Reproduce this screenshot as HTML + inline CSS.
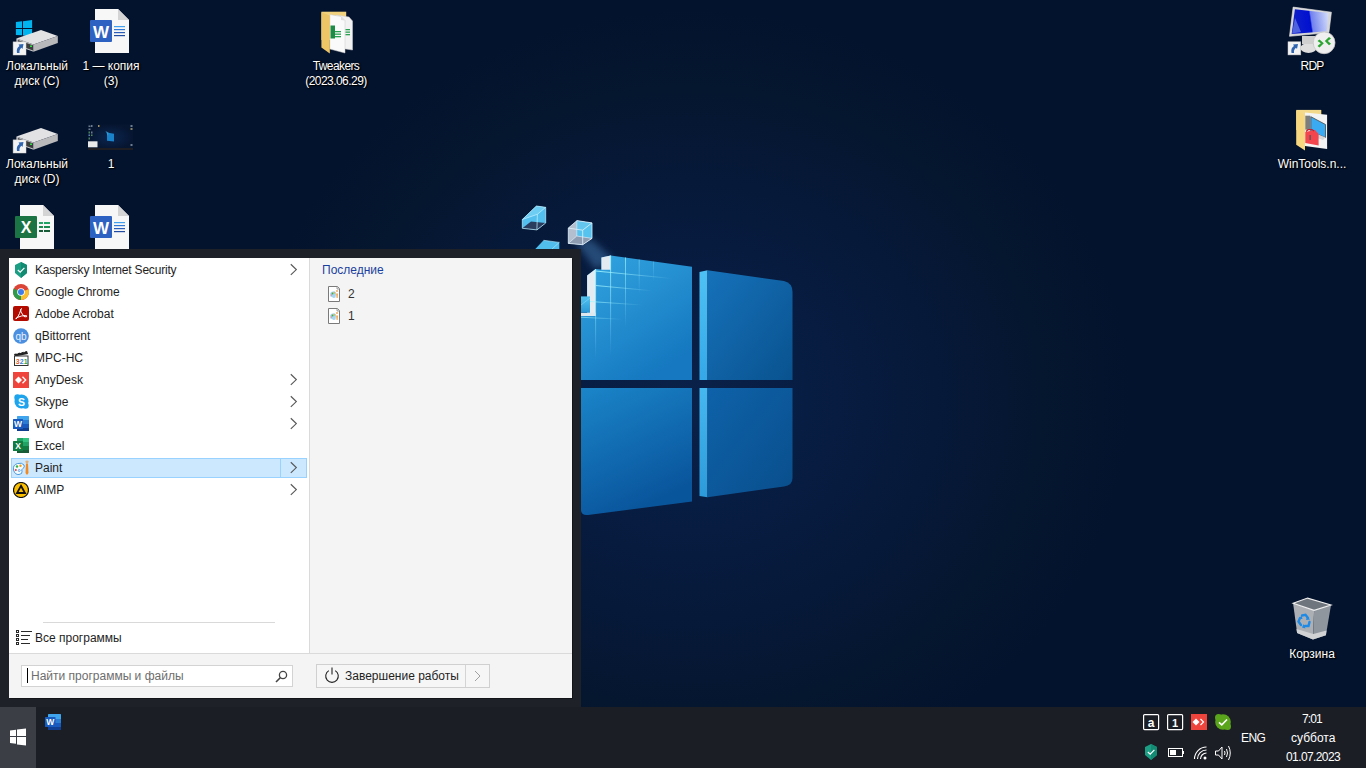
<!DOCTYPE html>
<html><head><meta charset="utf-8">
<style>
*{margin:0;padding:0;box-sizing:border-box}
html,body{width:1366px;height:768px;overflow:hidden;background:#04132d}
body{position:relative;font-family:"Liberation Sans",sans-serif;font-size:12px}
.a{position:absolute}
.t{position:absolute;white-space:nowrap;line-height:15px}
#bg{left:0;top:0;width:1366px;height:768px;
 background:radial-gradient(ellipse 440px 390px at 690px 400px,#0a2149 0%,#071b3f 40%,#05162f 80%,#04132d 100%)}
.lbl{color:#fff;text-shadow:0 0 2px #000,1px 1px 1px #000;text-align:center}
.m{color:#1e1e1e}
.tr{color:#fff}
</style></head><body>
<div id="bg" class="a"></div>

<!-- Big windows logo + cubes -->
<svg class="a" style="left:500px;top:190px" width="320" height="340" viewBox="500 190 320 340">
 <defs>
  <linearGradient id="gl" x1="0" y1="0" x2="0.6" y2="1">
   <stop offset="0" stop-color="#33a5e1"/><stop offset="1" stop-color="#1578c0"/>
  </linearGradient>
  <linearGradient id="gr" x1="0" y1="0" x2="1" y2="1">
   <stop offset="0" stop-color="#1672ba"/><stop offset="1" stop-color="#09528f"/>
  </linearGradient>
  <linearGradient id="gbl" x1="0" y1="0" x2="0.5" y2="1">
   <stop offset="0" stop-color="#1c88cc"/><stop offset="1" stop-color="#09559c"/>
  </linearGradient>
  <linearGradient id="gbr" x1="0" y1="0" x2="1" y2="1">
   <stop offset="0" stop-color="#0e62a9"/><stop offset="1" stop-color="#094e8c"/>
  </linearGradient>
  <linearGradient id="sidet" x1="0" y1="0" x2="0" y2="1"><stop offset="0" stop-color="#4fc2f4"/><stop offset="1" stop-color="#34a8e8"/></linearGradient>
  <linearGradient id="sideb" x1="0" y1="0" x2="0" y2="1"><stop offset="0" stop-color="#46b8f0"/><stop offset="1" stop-color="#2c9ad9"/></linearGradient>
  <radialGradient id="beam" cx="0.5" cy="0.5" r="0.5">
   <stop offset="0" stop-color="#6fb6e6" stop-opacity="0.55"/><stop offset="1" stop-color="#3a7ab8" stop-opacity="0"/>
  </radialGradient>
 </defs>
 <filter id="blr" x="-50%" y="-50%" width="200%" height="200%"><feGaussianBlur stdDeviation="3.5"/></filter>
 <path d="M576 243 L591 239 L612 258 L596 270 Z" fill="#4f8cc6" opacity="0.42" filter="url(#blr)"/>
 <!-- top-left pane -->
 <linearGradient id="fadeh" x1="0" y1="0" x2="1" y2="0"><stop offset="0" stop-color="#a0f4ff" stop-opacity="0.9"/><stop offset="1" stop-color="#a0f4ff" stop-opacity="0"/></linearGradient>
 <linearGradient id="fadev" x1="0" y1="0" x2="0" y2="1"><stop offset="0" stop-color="#a0f4ff" stop-opacity="0.9"/><stop offset="1" stop-color="#a0f4ff" stop-opacity="0"/></linearGradient>
 <path d="M581 380 L581 315.3 L587.1 315.3 L587.1 275.6 L595.6 269.1 L601.4 269.5 L601.4 257.4 L610.6 255.4 L692 266.7 L692 380 Z" fill="url(#gl)"/>
 <path d="M587.1 275.6 L595.6 269.1 L595.6 316 L587.1 316 Z" fill="#e4ebf1"/>
 <path d="M601.4 257.4 L610.6 255.4 L610.6 269.7 L601.4 269.7 Z" fill="#e4ebf1"/>
 <rect x="581" y="312.7" width="14.6" height="3.3" fill="#dfe8ef"/>
 <linearGradient id="cubeg" x1="0" y1="0" x2="0" y2="1"><stop offset="0" stop-color="#52c2f0"/><stop offset="1" stop-color="#2b98d6"/></linearGradient>
 <rect x="580.9" y="296.4" width="9.1" height="16.3" fill="url(#cubeg)"/>
 <path d="M581 305 L590 298" stroke="#9fe6ff" stroke-width="0.6" opacity="0.7"/>
 <rect x="595.1" y="269" width="1" height="90" fill="url(#fadev)"/>
 <rect x="610.1" y="255.5" width="1" height="100" fill="url(#fadev)"/>
 <rect x="625" y="257.5" width="1" height="70" fill="url(#fadev)" opacity="0.8"/>
 <rect x="638.7" y="259.5" width="1" height="35" fill="url(#fadev)" opacity="0.45"/>
 <rect x="653" y="261.5" width="1" height="20" fill="url(#fadev)" opacity="0.3"/>
 <path d="M595.6 270.5 L672 278 L672 279 L595.6 271.5 Z" fill="url(#fadeh)"/>
 <path d="M595.6 285 L652 290.3 L652 291.3 L595.6 286 Z" fill="url(#fadeh)" opacity="0.9"/>
 <path d="M590 301 L642 304.5 L642 305.5 L590 302 Z" fill="url(#fadeh)" opacity="0.8"/>
 <path d="M581 316.8 L622 318.8 L622 319.8 L581 317.8 Z" fill="url(#fadeh)" opacity="0.7"/>
 <!-- top-right pane -->
 <path d="M699.5 272 L707.5 270.2 L707.5 380 L699.5 380 Z" fill="url(#sidet)"/>
 <path d="M707.5 270.2 L784 281 Q792.5 283 792.5 292 L792.5 380 L707.5 380 Z" fill="url(#gr)"/>
 <!-- bottom-left pane -->
 <path d="M560 388 L692 388 L692 501.5 L588 515 Q581 515.5 581 510 L560 515 Z" fill="url(#gbl)"/>
 <!-- bottom-right pane -->
 <path d="M699.5 388 L707.5 388 L707.5 497.3 L699.5 496 Z" fill="url(#sideb)"/>
 <path d="M707.5 388 L792.5 388 L792.5 478 Q792.5 485.5 784 486.5 L707.5 497.3 Z" fill="url(#gbr)"/>
 <!-- cubes -->
 <path d="M522.3 219.5 L536.4 206 L545.7 207.3 L545.7 223 L536.9 229.9 L522.3 228.3 Z" fill="#52bfee"/>
 <path d="M522.3 228.3 L531 221.5 L545.7 223 L536.9 229.9 Z" fill="#2b3d5e"/>
 <path d="M522.3 219.5 L536.4 206 L545.7 207.3 L537.4 214.3 Z" fill="#6dcdf3"/>
 <g stroke="#c6f0ff" stroke-width="0.7" fill="none">
  <path d="M522.3 219.5 L536.4 206 L545.7 207.3 L545.7 223 L536.9 229.9 L522.3 228.3 Z"/>
  <path d="M522.3 219.5 L537.4 214.3 L545.7 207.3 M537.4 214.3 L536.9 229.9"/>
 </g>
 <path d="M568.3 228.1 L577 220.6 L592 222.9 L592 238.4 L582.7 244.7 L568.3 243.4 Z" fill="#b3bfcf"/>
 <path d="M576.8 220.8 L592 222.9 L592 238.4 L576.8 236 Z" fill="#56c2ee"/>
 <path d="M576.8 220.8 L592 222.9 L582.7 230.2 L576.8 229 Z" fill="#62c6ef"/>
 <path d="M568.3 243.4 L576.8 236 L592 238.4 L582.7 244.7 Z" fill="#8e9cb2"/>
 <g stroke="#e2f4ff" stroke-width="0.8" fill="none">
  <path d="M568.3 228.1 L577 220.6 L592 222.9 L592 238.4 L582.7 244.7 L568.3 243.4 Z"/>
  <path d="M568.3 228.1 L582.7 230.2 L592 222.9 M582.7 230.2 L582.7 244.7"/>
  <path d="M576.8 220.8 L576.8 236 L568.3 243.4 M576.8 236 L592 238.4" opacity="0.75"/>
 </g>
 <path d="M535.3 249 L543.6 240.3 L559.3 242.4 L559.3 249 Z" fill="#50bdec"/>
 <path d="M543.6 240.3 L559.3 242.4 L552 249" stroke="#b8ecff" stroke-width="0.6" fill="none"/>
</svg>

<!-- ===== Desktop icons ===== -->
<!-- C drive -->
<svg class="a" style="left:10px;top:15px" width="30" height="30" viewBox="10 15 30 30">
 <path d="M15.9 22 L22 21.3 L22 28 L15.9 28 Z M23 21.2 L32.1 19.9 L32.1 28 L23 28 Z M15.9 29 L22 29 L22 35.3 L15.9 34.9 Z M23 29 L32.1 29 L32.1 36.8 L23 35.6 Z" fill="#00b4f0"/>
</svg>
<svg class="a" style="left:10px;top:15px" width="52" height="42" viewBox="10 15 52 42">
 <g transform="translate(0,0)">
 <path d="M16.4 38.5 L41 30 L57.8 36 L33.5 44.5 Z" fill="#e2e2e4"/>
 <path d="M33.5 44.5 L57.8 36 L57.8 43 L33.5 51.7 Z" fill="#b9b9bb"/>
 <path d="M16.4 38.5 L33.5 44.5 L33.5 51.7 L16.4 45.5 Z" fill="#c9c9cb"/>
 <path d="M17.8 40 L33 45.3 L33 50.6 L17.8 45 Z" fill="#3c3c3e"/>
 <rect x="30" y="45.5" width="2" height="1.5" fill="#30e040"/>
 <rect x="13.1" y="41.9" width="12.9" height="13.1" fill="#f3f3f3" stroke="#d0d0d0" stroke-width="0.5"/>
 <path d="M17 53 Q16 48 19.5 46 L18.5 44.5 L23.5 44 L22.5 49 L21.5 47.8 Q19 49.5 19.5 53 Z" fill="#2f64b0"/>
 </g>
</svg>
<div class="t lbl" style="left:0;top:59px;width:74px">Локальный<br>диск (C)</div>

<!-- Word doc 1 — копия (3) -->
<svg class="a" style="left:90px;top:9px" width="40" height="44" viewBox="0 0 40 44">
 <path d="M5 0 L28 0 L39 11 L39 44 L5 44 Z" fill="#f7f7f7"/>
 <path d="M28 0 L39 11 L28 11 Z" fill="#d4d4d4"/>
 <rect x="0" y="11" width="22" height="22" rx="1" fill="#2d62c2"/>
 <text x="11" y="28.5" style="font-family:'Liberation Sans'" font-weight="bold" font-size="17" fill="#fff" text-anchor="middle">W</text>
 <rect x="24" y="17" width="11" height="1.2" fill="#41a0f0"/><rect x="24" y="20" width="11" height="1.2" fill="#2d78d8"/>
 <rect x="24" y="23" width="11" height="1.2" fill="#2a5dbb"/><rect x="24" y="26" width="11" height="1.2" fill="#204ba3"/>
</svg>
<div class="t lbl" style="left:74px;top:59px;width:74px">1 — копия<br>(3)</div>

<!-- Tweakers folder -->
<svg class="a" style="left:318px;top:9px" width="38" height="48" viewBox="318 9 38 48">
 <path d="M321.4 11.7 L346.2 11.7 L346.2 40 L321.4 40 Z" fill="#f3d27e"/>
 <path d="M336 15 L349 17 L352.5 21 L352.5 50 L339 48 Z" fill="#f2f2f2" stroke="#cfcfcf" stroke-width="0.5"/>
 <path d="M329.8 14.5 L341 16.5 L345 20.5 L345 53 L329.8 49 Z" fill="#fafafa" stroke="#c8c8c8" stroke-width="0.5"/>
 <path d="M341 16.5 L345 20.5 L341 20 Z" fill="#ddd"/>
 <rect x="330.5" y="25.5" width="4.5" height="13" fill="#1d8a45"/>
 <rect x="335" y="31" width="6" height="1.3" fill="#2aa152"/><rect x="335" y="33.5" width="6" height="1.3" fill="#2aa152"/><rect x="335" y="36" width="6" height="1.3" fill="#2aa152"/>
 <rect x="345.5" y="29" width="4.5" height="1.3" fill="#2aa152"/><rect x="345.5" y="31.5" width="4.5" height="1.3" fill="#2aa152"/><rect x="345.5" y="34" width="4.5" height="1.3" fill="#2aa152"/>
 <path d="M321.4 12.3 L329.8 15.5 L329.8 53.4 L321.4 47.5 Z" fill="#eec566"/>
</svg>
<div class="t lbl" style="left:299px;top:59px;width:74px"><span style="letter-spacing:-0.6px">Tweakers</span><br><span style="letter-spacing:-0.55px">(2023.06.29)</span></div>

<!-- D drive -->
<svg class="a" style="left:10px;top:113px" width="52" height="42" viewBox="10 15 52 42">
 <g transform="translate(0,0)">
 <path d="M16.4 38.5 L41 30 L57.8 36 L33.5 44.5 Z" fill="#e2e2e4"/>
 <path d="M33.5 44.5 L57.8 36 L57.8 43 L33.5 51.7 Z" fill="#b9b9bb"/>
 <path d="M16.4 38.5 L33.5 44.5 L33.5 51.7 L16.4 45.5 Z" fill="#c9c9cb"/>
 <path d="M17.8 40 L33 45.3 L33 50.6 L17.8 45 Z" fill="#3c3c3e"/>
 <rect x="30" y="45.5" width="2" height="1.5" fill="#30e040"/>
 <rect x="13.1" y="41.9" width="12.9" height="13.1" fill="#f3f3f3" stroke="#d0d0d0" stroke-width="0.5"/>
 <path d="M17 53 Q16 48 19.5 46 L18.5 44.5 L23.5 44 L22.5 49 L21.5 47.8 Q19 49.5 19.5 53 Z" fill="#2f64b0"/>
 </g>
</svg>
<div class="t lbl" style="left:0;top:157px;width:74px">Локальный<br>диск (D)</div>

<!-- screenshot 1 -->
<svg class="a" style="left:88px;top:124px" width="46" height="27" viewBox="88 124 46 27">
 <defs><radialGradient id="thg" cx="0.5" cy="0.5" r="0.5"><stop offset="0" stop-color="#0b2650"/><stop offset="1" stop-color="#061530"/></radialGradient></defs>
 <rect x="88" y="124.5" width="45" height="25.5" fill="url(#thg)"/>
 <rect x="88" y="148" width="45" height="2" fill="#1e1e22"/>
 <rect x="88" y="141.3" width="9.5" height="6" fill="#e9e9e9"/>
 <path d="M107 132.5 L114 133.8 L114 141.5 L107 140.8 Z" fill="#1a82c8"/>
 <path d="M105.5 131 L108.5 132.5 L108 136 Z" fill="#3aa6e0" opacity="0.7"/>
 <g fill="#8896a8" opacity="0.8">
  <rect x="88.5" y="125.5" width="2" height="1.5"/><rect x="91" y="125" width="1.5" height="2"/><rect x="98" y="125" width="1.5" height="2" fill="#c8b070"/>
  <rect x="88.5" y="128.5" width="2" height="1.5"/>
  <rect x="88.5" y="131.5" width="1.5" height="2" fill="#5a9a6a"/><rect x="91" y="131.5" width="1.5" height="2"/>
  <rect x="88.5" y="134.5" width="1.5" height="1.5" fill="#7aa0e0"/><rect x="91" y="134.5" width="1.5" height="1.5" fill="#6aaa5a"/>
  <rect x="88.5" y="137.5" width="1.5" height="2" fill="#5a9a6a"/>
  <rect x="130.5" y="125" width="2" height="2"/><rect x="130.5" y="128" width="2" height="2" fill="#a89a70"/><rect x="130.5" y="144" width="2" height="2"/>
 </g>
</svg>
<div class="t lbl" style="left:74px;top:157px;width:74px">1</div>

<!-- row3 excel -->
<svg class="a" style="left:15px;top:205px" width="40" height="44" viewBox="0 0 40 44">
 <path d="M5 0 L28 0 L39 11 L39 44 L5 44 Z" fill="#f7f7f7"/>
 <path d="M28 0 L39 11 L28 11 Z" fill="#d4d4d4"/>
 <rect x="0" y="11" width="22" height="22" rx="1" fill="#1b7443"/>
 <text x="11" y="28" style="font-family:'Liberation Sans'" font-weight="bold" font-size="16" fill="#fff" text-anchor="middle">X</text>
 <rect x="24" y="17" width="4" height="2" fill="#21a366"/><rect x="29" y="17" width="6" height="2" fill="#21a366"/>
 <rect x="24" y="21" width="4" height="2" fill="#1a8a50"/><rect x="29" y="21" width="6" height="2" fill="#1a8a50"/>
 <rect x="24" y="25" width="4" height="2" fill="#185c37"/><rect x="29" y="25" width="6" height="2" fill="#185c37"/>
</svg>
<!-- row3 word -->
<svg class="a" style="left:90px;top:205px" width="40" height="44" viewBox="0 0 40 44">
 <path d="M5 0 L28 0 L39 11 L39 44 L5 44 Z" fill="#f7f7f7"/>
 <path d="M28 0 L39 11 L28 11 Z" fill="#d4d4d4"/>
 <rect x="0" y="11" width="22" height="22" rx="1" fill="#2d62c2"/>
 <text x="11" y="28.5" style="font-family:'Liberation Sans'" font-weight="bold" font-size="17" fill="#fff" text-anchor="middle">W</text>
 <rect x="24" y="17" width="11" height="1.2" fill="#41a0f0"/><rect x="24" y="20" width="11" height="1.2" fill="#2d78d8"/>
 <rect x="24" y="23" width="11" height="1.2" fill="#2a5dbb"/><rect x="24" y="26" width="11" height="1.2" fill="#204ba3"/>
</svg>

<!-- RDP -->
<svg class="a" style="left:1284px;top:2px" width="56" height="56" viewBox="1284 2 56 56">
 <defs><linearGradient id="rdps" x1="0" y1="0.1" x2="1" y2="0">
  <stop offset="0" stop-color="#1020c8"/><stop offset="0.46" stop-color="#0010d0"/><stop offset="0.5" stop-color="#7080ee"/><stop offset="1" stop-color="#d8e2fb"/></linearGradient></defs>
 <ellipse cx="1308.5" cy="48" rx="8" ry="5" fill="#dedede"/>
 <rect x="1302" y="36" width="13" height="8" fill="#cfcfcf"/>
 <path d="M1293.1 7.1 L1331.4 12.2 L1328.9 32.6 L1289.5 36.3 Z" fill="#d6d6d6" stroke="#eee" stroke-width="0.6"/>
 <path d="M1294.9 9.3 L1328.5 12.9 L1326.7 31.2 L1291.7 34.1 Z" fill="url(#rdps)"/>
 <path d="M1295 18 L1301 32 L1292 33.5 Z" fill="#6c80e8" opacity="0.7"/>
 <circle cx="1324.1" cy="42.8" r="10.9" fill="#efefef" stroke="#c4c4c4" stroke-width="0.8"/>
 <path d="M1317.5 41 L1319.5 39.5 L1323.8 43.3 L1319.5 47.5 L1317.5 46 L1320.8 43.3 Z M1331 38.5 L1329 37 L1324.8 41 L1329 45.3 L1331 43.8 L1327.8 41 Z" fill="#2aa52f"/>
 <rect x="1288" y="41.8" width="12.8" height="13.1" fill="#f3f3f3" stroke="#d0d0d0" stroke-width="0.5"/>
 <path d="M1291.5 53 Q1290.5 48 1294 46 L1293 44.5 L1298 44 L1297 49 L1296 47.8 Q1293.5 49.5 1294 53 Z" fill="#2f64b0"/>
</svg>
<div class="t lbl" style="left:1274px;top:59px;width:76px;letter-spacing:-0.8px">RDP</div>

<!-- WinTools -->
<svg class="a" style="left:1292px;top:106px" width="40" height="48" viewBox="1292 106 40 48">
 <path d="M1296.2 109.9 L1321.3 109.9 L1321.3 130 L1296.2 130 Z" fill="#f5d98a"/>
 <path d="M1305 112.5 L1327.1 114.8 L1327.1 149 L1305 146 Z" fill="#f4f4f4"/>
 <rect x="1305.3" y="115.7" width="4.9" height="14" fill="#7d7d7d"/>
 <path d="M1310.8 116.7 L1325.5 124.5 L1325.5 137.6 L1310.8 131.7 Z" fill="#3aabf2" stroke="#444" stroke-width="0.8"/>
 <path d="M1311 131.5 L1325.5 137.5 L1323 140 L1314 137 Z" fill="#d8d8d8"/>
 <path d="M1305.3 132 L1315 130 L1318.6 134 L1318.6 145.4 L1305.3 143 Z" fill="#f2454d"/>
 <path d="M1306 131.5 L1308 129.7 L1312 129.5 L1314 131" stroke="#c02030" stroke-width="1.2" fill="none"/>
 <rect x="1309.5" y="135" width="1.3" height="5" fill="#555"/>
 <path d="M1296.2 110.5 L1305 115.5 L1305 150.6 L1296.2 144.7 Z" fill="#f7d77f"/>
</svg>
<div class="t lbl" style="left:1274px;top:157px;width:76px">WinTools.n...</div>

<!-- Recycle bin -->
<svg class="a" style="left:1288px;top:592px" width="48" height="52" viewBox="1288 592 48 52">
 <path d="M1293.1 603.2 L1314.1 610.3 L1313 639.4 L1297.1 633 Z" fill="#acb0b5"/>
 <path d="M1314.1 610.3 L1331 604.9 L1325.9 635.3 L1313 639.4 Z" fill="#90969d"/>
 <path d="M1293.1 603.2 L1307.6 598.1 L1331 604.9 L1314.1 610.3 Z" fill="#6f757c"/>
 <path d="M1293.1 603.2 L1307.6 598.1 L1331 604.9 L1314.1 610.3 Z" fill="none" stroke="#f0f0f0" stroke-width="1.1"/>
 <path d="M1296.5 629 L1313.3 634 L1326.5 630.5 L1325.9 635.3 L1313 639.4 L1297.1 633 Z" fill="#d0d2d4"/>
 <g fill="none" stroke="#1e8ae6" stroke-width="2.4" stroke-linecap="round">
  <path d="M1302 615.5 L1305.5 614.8 L1308 618"/>
  <path d="M1309.5 622 L1308.5 626 L1305 626"/>
  <path d="M1301 625 L1298.5 621.5 L1300 618"/>
 </g>
 <path d="M1307 616.5 L1310 619.5 L1306 620 Z M1303.5 624 L1305.5 628.5 L1302 627.5 Z M1299 619 L1301.5 615.5 L1302.5 619 Z" fill="#1e8ae6"/>
</svg>
<div class="t lbl" style="left:1274px;top:647px;width:76px">Корзина</div>

<!-- ===== Start menu ===== -->
<div class="a" style="left:0;top:249px;width:581px;height:458px;background:#1e2128"></div>
<div class="a" style="left:9px;top:258px;width:563px;height:440px;background:#fff;box-shadow:1px 1px 0 #121418"></div>
<!-- right panel -->
<div class="a" style="left:309px;top:258px;width:263px;height:395px;background:#f4f4f4;border-left:1px solid #dadada"></div>
<!-- bottom band -->
<div class="a" style="left:9px;top:653px;width:563px;height:45px;background:#f4f4f4;border-top:1px solid #dadada"></div>

<!-- highlight -->
<div class="a" style="left:11px;top:458px;width:296px;height:20px;background:#cce8ff;border:1px solid #99d1ff"></div>
<div class="a" style="left:280px;top:459px;width:1px;height:18px;background:#99d1ff"></div>

<!-- menu texts -->
<div class="t m" style="left:35px;top:263px;letter-spacing:-0.2px">Kaspersky Internet Security</div>
<div class="t m" style="left:35px;top:285px">Google Chrome</div>
<div class="t m" style="left:35px;top:307px">Adobe Acrobat</div>
<div class="t m" style="left:35px;top:329px">qBittorrent</div>
<div class="t m" style="left:35px;top:351px">MPC-HC</div>
<div class="t m" style="left:35px;top:373px">AnyDesk</div>
<div class="t m" style="left:35px;top:395px">Skype</div>
<div class="t m" style="left:35px;top:417px">Word</div>
<div class="t m" style="left:35px;top:439px">Excel</div>
<div class="t m" style="left:35px;top:461px">Paint</div>
<div class="t m" style="left:35px;top:483px">AIMP</div>

<!-- chevrons -->
<svg class="a" style="left:285px;top:258px" width="20" height="250" viewBox="285 258 20 250">
 <g stroke="#5a5a5a" stroke-width="1.2" fill="none">
  <path d="M290.8 264.3 L296.3 269.6 L290.8 274.9"/>
  <path d="M290.8 374.3 L296.3 379.6 L290.8 384.9"/>
  <path d="M290.8 396.3 L296.3 401.6 L290.8 406.9"/>
  <path d="M290.8 418.3 L296.3 423.6 L290.8 428.9"/>
  <path d="M290.8 462.3 L296.3 467.6 L290.8 472.9"/>
  <path d="M290.8 484.3 L296.3 489.6 L290.8 494.9"/>
 </g>
</svg>

<!-- menu icons -->
<!-- kaspersky -->
<svg class="a" style="left:13px;top:262px" width="16" height="16" viewBox="0 0 16 16">
 <path d="M8 0 L14 3 L14 11 L8 16 L2 11 L2 3 Z" fill="#1b9e84"/>
 <path d="M8 0 L14 3 L14 11 L8 16 Z" fill="#138a72"/>
 <path d="M4.8 8 L7.2 10.2 L11.4 5.8" stroke="#fff" stroke-width="1.2" fill="none"/>
</svg>
<!-- chrome -->
<svg class="a" style="left:13px;top:284px" width="16" height="16" viewBox="0 0 16 16">
 <circle cx="8" cy="8" r="8" fill="#db4437"/>
 <path d="M8 8 L15.5 5.3 A8 8 0 0 1 8 16 Z" fill="#fbc02d"/>
 <path d="M8 8 L8 16 A8 8 0 0 1 0.8 4.6 Z" fill="#2e9b4a"/>
 <circle cx="8" cy="8" r="3.8" fill="#fff"/><circle cx="8" cy="8" r="3" fill="#3f7ee8"/>
</svg>
<!-- acrobat -->
<svg class="a" style="left:13px;top:306px" width="16" height="16" viewBox="0 0 16 16">
 <rect x="0" y="0" width="16" height="15" rx="2" fill="#b30b00"/>
 <path d="M8.5 2.5 Q7 2.5 8 6 L11 10.5 Q14 11.5 14 10 Q13 9 8.5 10 L4 11.5 Q2 13 3 13 Q4 13 6.5 7.5 Q8 3 8.5 2.5Z" stroke="#fff" stroke-width="1" fill="none"/>
</svg>
<!-- qbittorrent -->
<svg class="a" style="left:13px;top:328px" width="16" height="16" viewBox="0 0 16 16">
 <circle cx="8" cy="8" r="7.8" fill="#4a8fe0"/>
 <text x="8" y="11.5" style="font-family:'Liberation Sans'" font-size="10" fill="#e8f1ff" text-anchor="middle">qb</text>
</svg>
<!-- mpc-hc -->
<svg class="a" style="left:13px;top:350px" width="16" height="16" viewBox="0 0 16 16">
 <path d="M1 4 L14 1 L15 4 L2 6.5 Z" fill="#222"/>
 <path d="M3.5 3.5 L5 2.8 M7 2.6 L8.5 2.2 M10.5 1.8 L12 1.5" stroke="#fff" stroke-width="0.9"/>
 <rect x="1.5" y="6" width="13.5" height="9.5" fill="#fff" stroke="#333" stroke-width="1"/>
 <text x="2.8" y="14" style="font-family:'Liberation Sans'" font-weight="bold" font-size="7" fill="#e0662a">3</text>
 <text x="6.8" y="14" style="font-family:'Liberation Sans'" font-weight="bold" font-size="7" fill="#3a82d8">2</text>
 <text x="10.8" y="14" style="font-family:'Liberation Sans'" font-weight="bold" font-size="7" fill="#3aa63a">1</text>
</svg>
<!-- anydesk -->
<svg class="a" style="left:13px;top:372px" width="16" height="16" viewBox="0 0 16 16">
 <rect width="16" height="16" fill="#ef443b"/>
 <path d="M5.5 4.5 L9 8 L5.5 11.5 L2 8 Z" fill="#fff"/>
 <path d="M9.5 4.8 L12.7 8 L9.5 11.2" stroke="#fff" stroke-width="1.3" fill="none"/>
</svg>
<!-- skype -->
<svg class="a" style="left:14px;top:394px" width="15" height="15" viewBox="0 0 15 15">
 <circle cx="7.5" cy="7.5" r="7" fill="#1ea4ec"/>
 <circle cx="3.5" cy="3.5" r="3.2" fill="#1ea4ec"/><circle cx="11.5" cy="11.5" r="3.2" fill="#1ea4ec"/>
 <text x="7.5" y="11.5" style="font-family:'Liberation Sans'" font-weight="bold" font-size="10.5" fill="#fff" text-anchor="middle">S</text>
</svg>
<!-- word -->
<svg class="a" style="left:13px;top:416px" width="16" height="16" viewBox="0 0 16 16">
 <rect x="4" y="0" width="12" height="15" rx="0.5" fill="#41a5ee"/>
 <rect x="4" y="4" width="12" height="4" fill="#2b7cd3"/>
 <rect x="4" y="8" width="12" height="4" fill="#185abd"/>
 <rect x="4" y="12" width="12" height="3" fill="#103f91"/>
 <rect x="0" y="3" width="10" height="10" rx="0.5" fill="#185abd"/>
 <text x="5" y="11.3" style="font-family:'Liberation Sans'" font-weight="bold" font-size="8.5" fill="#fff" text-anchor="middle">W</text>
</svg>
<!-- excel -->
<svg class="a" style="left:13px;top:438px" width="16" height="16" viewBox="0 0 16 16">
 <rect x="4" y="0" width="12" height="15" rx="0.5" fill="#21a366"/>
 <rect x="10" y="0" width="6" height="4" fill="#33c481"/>
 <rect x="4" y="8" width="12" height="4" fill="#107c41"/>
 <rect x="4" y="12" width="12" height="3" fill="#185c37"/>
 <rect x="0" y="3" width="10" height="10" rx="0.5" fill="#107c41"/>
 <text x="5" y="11.3" style="font-family:'Liberation Sans'" font-weight="bold" font-size="8.5" fill="#fff" text-anchor="middle">X</text>
</svg>
<!-- paint -->
<svg class="a" style="left:12px;top:460px" width="18" height="16" viewBox="0 0 18 16">
 <path d="M1.5 10 Q0.5 5 5.5 3.5 Q10 2.3 12 5 Q13 7 11 8.5 Q9 9.5 10 11.5 Q10.5 14 7 14.5 Q3 15 1.5 10Z" fill="#f4fbff" stroke="#3a8ed8" stroke-width="0.9"/>
 <circle cx="5" cy="6.5" r="1.2" fill="#35b34a"/><circle cx="8.5" cy="5.8" r="1.2" fill="#f3a21b"/>
 <circle cx="3.8" cy="10" r="1" fill="#e5413b"/><circle cx="7.2" cy="10.5" r="1" fill="none" stroke="#3a8ed8" stroke-width="0.7"/>
 <path d="M14 3.5 L16 3.5 L16.5 13 L15 15 L13.5 13 Z" fill="#f08a24"/>
 <path d="M13.3 1 Q15 0 16.7 1 L16 3.5 L14 3.5 Z" fill="#e2b07a"/>
</svg>
<!-- aimp -->
<svg class="a" style="left:13px;top:482px" width="16" height="16" viewBox="0 0 16 16">
 <circle cx="8" cy="8" r="7.5" fill="#fbbf00" stroke="#111" stroke-width="1.2"/>
 <path d="M8 3.8 L12 11 L4 11 Z" fill="none" stroke="#111" stroke-width="1.8"/>
</svg>

<!-- separator & all programs -->
<div class="a" style="left:43px;top:622px;width:232px;height:1px;background:#d9d9d9"></div>
<svg class="a" style="left:15px;top:629px" width="19" height="17" viewBox="15 629 19 17">
 <g fill="none" stroke="#2a2a2a" stroke-width="1">
  <rect x="16.5" y="630.5" width="2" height="2"/><rect x="16.5" y="634.5" width="2" height="2"/><rect x="16.5" y="638.5" width="2" height="2"/><rect x="16.5" y="642.5" width="2" height="2"/>
 </g>
 <g fill="#2a2a2a"><rect x="21" y="631" width="11" height="1"/><rect x="21" y="635" width="9" height="1"/><rect x="21" y="639" width="7" height="1"/><rect x="21" y="643" width="9" height="1"/></g>
</svg>
<div class="t m" style="left:35px;top:631px">Все программы</div>

<!-- recent -->
<div class="t" style="left:322px;top:263px;color:#1a3f9e">Последние</div>
<svg class="a" style="left:325px;top:283px" width="18" height="42" viewBox="325 283 18 42">
<g>
 <path d="M328.5 286.5 L337.5 286.5 L339.5 288.5 L339.5 301.5 L328.5 301.5 Z" fill="#fff" stroke="#7a7a7a" stroke-width="1"/>
 <path d="M337 286.5 L337 289 L339.5 289" fill="#eee" stroke="#8a8a8a" stroke-width="0.8"/>
 <path d="M330.2 293 Q331.5 291 334.5 291.3 Q336.5 292 336 294 L335.5 297.5 Q333.5 298.5 332 297 L330.3 296.5 Z" fill="#a8d4ef"/>
 <circle cx="332.5" cy="293.5" r="0.9" fill="#36b24a"/><circle cx="334.2" cy="292.8" r="0.9" fill="#f4b030"/><circle cx="331.3" cy="295" r="0.7" fill="#e88080"/>
 <path d="M336.3 293.5 L337.8 293.5 L337.5 298 L336.7 298 Z" fill="#f28a1e"/>
 <circle cx="337" cy="291" r="1.1" fill="#f0b070"/>
</g>
<g transform="translate(0,22)"><g>
 <path d="M328.5 286.5 L337.5 286.5 L339.5 288.5 L339.5 301.5 L328.5 301.5 Z" fill="#fff" stroke="#7a7a7a" stroke-width="1"/>
 <path d="M337 286.5 L337 289 L339.5 289" fill="#eee" stroke="#8a8a8a" stroke-width="0.8"/>
 <path d="M330.2 293 Q331.5 291 334.5 291.3 Q336.5 292 336 294 L335.5 297.5 Q333.5 298.5 332 297 L330.3 296.5 Z" fill="#a8d4ef"/>
 <circle cx="332.5" cy="293.5" r="0.9" fill="#36b24a"/><circle cx="334.2" cy="292.8" r="0.9" fill="#f4b030"/><circle cx="331.3" cy="295" r="0.7" fill="#e88080"/>
 <path d="M336.3 293.5 L337.8 293.5 L337.5 298 L336.7 298 Z" fill="#f28a1e"/>
 <circle cx="337" cy="291" r="1.1" fill="#f0b070"/>
</g></g>
</svg>
<div class="t" style="left:348px;top:287px;color:#333">2</div>
<div class="t" style="left:348px;top:309px;color:#333">1</div>

<!-- search box -->
<div class="a" style="left:21px;top:665px;width:272px;height:22px;background:#fff;border:1px solid #d3d3d3"></div>
<div class="a" style="left:27px;top:668px;width:1px;height:15px;background:#000"></div>
<div class="t" style="left:31px;top:669px;color:#6d6d6d">Найти программы и файлы</div>
<svg class="a" style="left:275px;top:670px" width="13" height="13" viewBox="0 0 13 13">
 <circle cx="8" cy="5" r="3.6" fill="none" stroke="#444" stroke-width="1.3"/>
 <path d="M5.5 7.5 L1 12" stroke="#444" stroke-width="1.6"/>
</svg>

<!-- shutdown -->
<div class="a" style="left:316px;top:664px;width:174px;height:24px;background:#f6f6f6;border:1px solid #d0d0d0"></div>
<div class="a" style="left:465px;top:665px;width:1px;height:22px;background:#d4d4d4"></div>
<svg class="a" style="left:324px;top:667px" width="16" height="16" viewBox="0 0 16 16">
 <path d="M4.8 3.6 A6.3 6.3 0 1 0 11.2 3.6" fill="none" stroke="#222" stroke-width="1.1"/>
 <path d="M8 0.5 L8 7.5" stroke="#222" stroke-width="1.1"/>
</svg>
<div class="t m" style="left:345px;top:669px">Завершение работы</div>
<svg class="a" style="left:474px;top:670px" width="8" height="12" viewBox="0 0 8 12">
 <path d="M1 1 L6 6 L1 11" stroke="#a0a0a0" stroke-width="1" fill="none"/>
</svg>

<!-- ===== Taskbar ===== -->
<div class="a" style="left:0;top:707px;width:1366px;height:61px;background:#1b1e25"></div>
<div class="a" style="left:0;top:707px;width:36px;height:61px;background:#3b3e45"></div>
<svg class="a" style="left:0;top:720px" width="36" height="40" viewBox="0 720 36 40">
 <path d="M10 730.6 L16 729.8 L16 736 L10 736 Z M17 729.6 L26 728.5 L26 736 L17 736 Z M10 737 L16 737 L16 743.7 L10 742.9 Z M17 737 L26 737 L26 745.4 L17 744.4 Z" fill="#fff"/>
</svg>
<!-- taskbar word -->
<svg class="a" style="left:45px;top:714px" width="17" height="16" viewBox="0 0 17 16">
 <rect x="3" y="0" width="13" height="16" rx="0.5" fill="#41a5ee"/>
 <rect x="3" y="5" width="13" height="4" fill="#2b7cd3"/>
 <rect x="3" y="9" width="13" height="4" fill="#185abd"/>
 <rect x="3" y="13" width="13" height="3" fill="#103f91"/>
 <rect x="0" y="3" width="10.5" height="10" rx="0.5" fill="#185abd"/>
 <text x="5.2" y="11.3" style="font-family:'Liberation Sans'" font-weight="bold" font-size="8.5" fill="#fff" text-anchor="middle">W</text>
</svg>

<!-- tray -->
<svg class="a" style="left:1143px;top:714px" width="90" height="47" viewBox="0 0 90 47">
 <rect x="0.6" y="0.6" width="15" height="15" rx="1" fill="none" stroke="#fff" stroke-width="1.2"/>
 <text x="8" y="12.5" style="font-family:'Liberation Sans'" font-weight="bold" font-size="12" fill="#fff" text-anchor="middle">a</text>
 <rect x="24.6" y="0.6" width="15" height="15" rx="1" fill="none" stroke="#fff" stroke-width="1.2"/>
 <text x="32" y="12.5" style="font-family:'Liberation Sans'" font-weight="bold" font-size="11" fill="#fff" text-anchor="middle">1</text>
 <rect x="48" y="0" width="16" height="16" fill="#ef443b"/>
 <path d="M53 4.5 L56.5 8 L53 11.5 L49.5 8 Z" fill="#fff"/>
 <path d="M57.5 5 L60.5 8 L57.5 11" stroke="#fff" stroke-width="1.2" fill="none"/>
 <circle cx="80" cy="8" r="7.8" fill="#5aa51c"/>
 <circle cx="75.5" cy="3.5" r="3.5" fill="#5aa51c"/><circle cx="84.5" cy="12.5" r="3.5" fill="#5aa51c"/>
 <path d="M76 8.3 L78.8 10.8 L84 5.5" stroke="#fff" stroke-width="1.6" fill="none"/>
 <!-- row 2 -->
 <path d="M8 30 L14 33 L14 41 L8 46 L2 41 L2 33 Z" fill="#1b9e84"/>
 <path d="M8 30 L14 33 L14 41 L8 46 Z" fill="#138a72"/>
 <path d="M4.8 38 L7.2 40.2 L11.4 35.8" stroke="#fff" stroke-width="1.2" fill="none"/>
 <rect x="25.5" y="34.5" width="14" height="8" fill="none" stroke="#fff" stroke-width="1"/>
 <rect x="40" y="37" width="1" height="3" fill="#fff"/>
 <rect x="27" y="36" width="6" height="5" fill="#fff"/>
 <g fill="none" stroke="#fff" stroke-width="1.1">
  <path d="M51.5 45 A12 12 0 0 1 63.5 33"/>
  <path d="M54.5 45 A9 9 0 0 1 63.5 36"/>
  <path d="M57.5 45 A6 6 0 0 1 63.5 39"/>
 </g>
 <circle cx="62" cy="44" r="1.5" fill="#fff"/>
 <path d="M72.5 37 L75.5 37 L79 33 L79 45 L75.5 41 L72.5 41 Z" fill="none" stroke="#fff" stroke-width="1"/>
 <g fill="none" stroke="#fff" stroke-width="1">
  <path d="M81.5 37 Q82.5 39 81.5 41"/>
  <path d="M83.5 35 Q85.5 39 83.5 43"/>
  <path d="M85.5 32 Q89 39 85.5 46"/>
 </g>
</svg>
<div class="t tr" style="left:1241px;top:731px;letter-spacing:-0.6px">ENG</div>
<div class="t tr" style="left:1302px;top:712px;letter-spacing:-0.9px">7:01</div>
<div class="t tr" style="left:1291px;top:731px">суббота</div>
<div class="t tr" style="left:1286px;top:750px;letter-spacing:-0.6px">01.07.2023</div>
</body></html>
